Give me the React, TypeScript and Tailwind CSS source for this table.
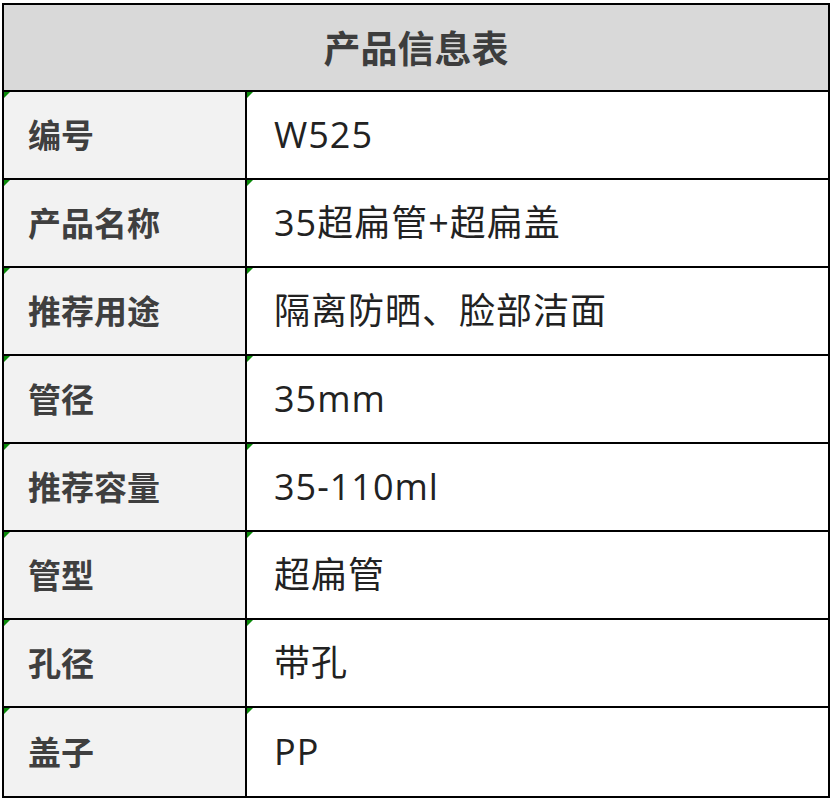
const rows: [string, string][] = [
  ["编号", "W525"],
  ["产品名称", "35超扁管+超扁盖"],
  ["推荐用途", "隔离防晒、脸部洁面"],
  ["管径", "35mm"],
  ["推荐容量", "35-110ml"],
  ["管型", "超扁管"],
  ["孔径", "带孔"],
  ["盖子", "PP"],
];

const Mark = () => (
  <svg className="absolute left-0 top-0" width="6" height="6" viewBox="0 0 6 6">
    <polygon points="0,0 6,0 0,6" fill="#0a8a0a" />
  </svg>
);

export default function App() {
  return (
    <div className="min-h-[802px] w-[832px] bg-white pl-[2px] pt-[3px]">
      <div className="w-[828px] border-2 border-black">
        <div className="flex h-[87px] items-center justify-center border-b-2 border-black bg-[#d9d9d9] pt-[1px]">
          <span className="text-[37px] font-bold text-[#3d3d3d] [font-family:'Noto_Sans_CJK_SC',sans-serif]">
            产品信息表
          </span>
        </div>
        {rows.map(([label, value], i) => (
          <div
            key={label}
            className={`flex h-[88px] ${i < rows.length - 1 ? "border-b-2 border-black" : "h-[86px]"}`}
          >
            <div className="relative flex w-[243px] items-center border-r-2 border-black bg-[#f2f2f2] pl-[24px]">
              <Mark />
              <span className="text-[33px] font-bold text-[#3f3f3f] [font-family:'Noto_Sans_CJK_SC',sans-serif]">
                {label}
              </span>
            </div>
            <div className="relative flex flex-1 items-center pl-[27px]">
              <Mark />
              <span className="text-[36px] tracking-[1px] text-[#222] [font-family:'Open_Sans','Noto_Sans_CJK_SC',sans-serif]">
                {value}
              </span>
            </div>
          </div>
        ))}
      </div>
    </div>
  );
}
